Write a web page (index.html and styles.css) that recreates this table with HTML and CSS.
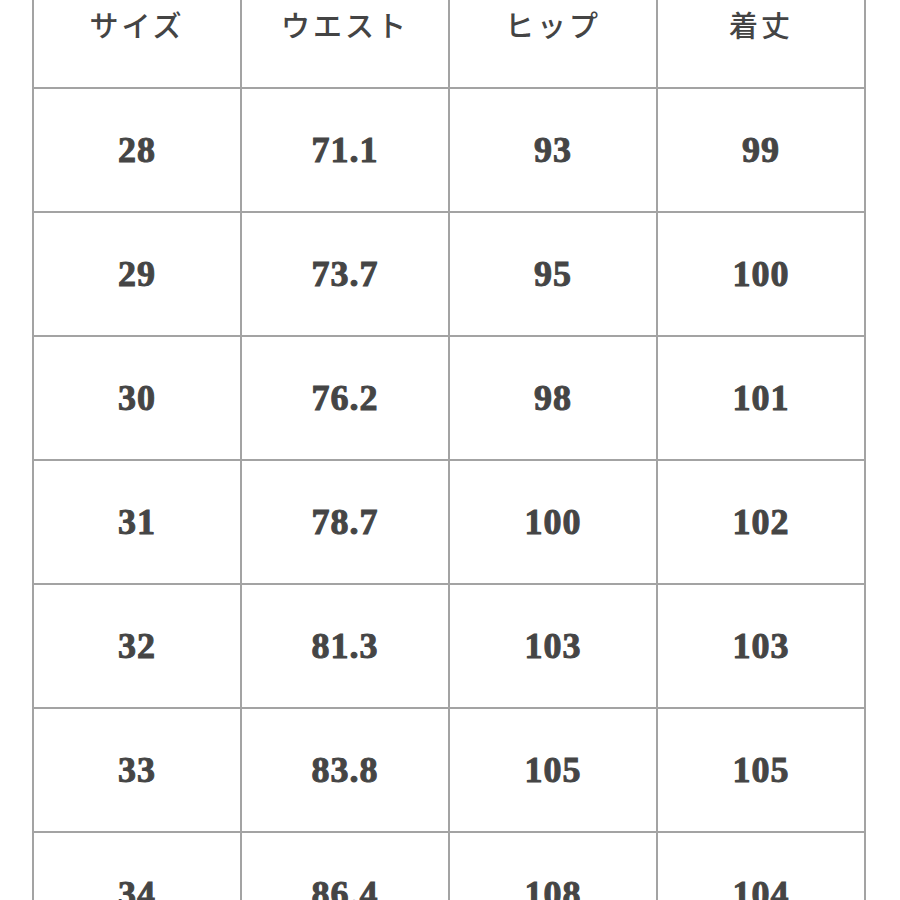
FILE: index.html
```html
<!DOCTYPE html>
<html lang="ja">
<head>
<meta charset="utf-8">
<link rel="stylesheet" href="styles.css">
</head>
<body>
<div class="sheet">
  <div class="grid">
    <div class="cell head">サイズ</div>
    <div class="cell head">ウエスト</div>
    <div class="cell head">ヒップ</div>
    <div class="cell head">着丈</div>

    <div class="cell">28</div><div class="cell">71.1</div><div class="cell">93</div><div class="cell">99</div>
    <div class="cell">29</div><div class="cell">73.7</div><div class="cell">95</div><div class="cell">100</div>
    <div class="cell">30</div><div class="cell">76.2</div><div class="cell">98</div><div class="cell">101</div>
    <div class="cell">31</div><div class="cell">78.7</div><div class="cell">100</div><div class="cell">102</div>
    <div class="cell">32</div><div class="cell">81.3</div><div class="cell">103</div><div class="cell">103</div>
    <div class="cell">33</div><div class="cell">83.8</div><div class="cell">105</div><div class="cell">105</div>
    <div class="cell">34</div><div class="cell">86.4</div><div class="cell">108</div><div class="cell">104</div>
  </div>
</div>
</body>
</html>
```
FILE: styles.css
```css
html, body {
  margin: 0;
  padding: 0;
  background: #ffffff;
  overflow: hidden;
}
.sheet {
  width: 900px;
  height: 900px;
  overflow: hidden;
  padding-left: 32px;
  box-sizing: border-box;
}
.grid {
  display: grid;
  grid-template-columns: repeat(4, 206px);
  grid-auto-rows: 122px;
  grid-template-rows: 87px;
  gap: 2px;
  padding: 0 2px 2px 2px;
  background: #a3a3a3;
  width: max-content;
}
.cell {
  background: #ffffff;
  display: flex;
  align-items: center;
  justify-content: center;
  font-family: "Liberation Serif", "DejaVu Serif", serif;
  font-weight: 700;
  font-size: 36px;
  letter-spacing: 1px;
  -webkit-text-stroke: 1px #454545;
  color: #454545;
}
.cell.head {
  align-items: flex-start;
  padding-top: 4px;
  font-family: "Noto Sans CJK JP", sans-serif;
  font-weight: 500;
  font-size: 29px;
  letter-spacing: 3px;
  line-height: 40px;
  -webkit-text-stroke: 0;
  color: #444444;
}
```
